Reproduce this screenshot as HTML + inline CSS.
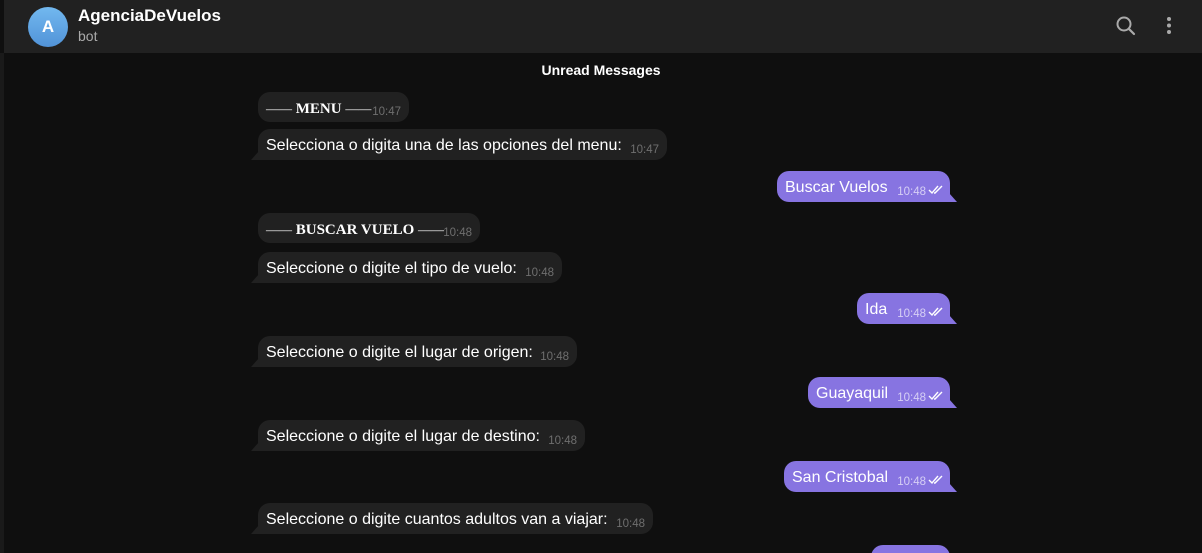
<!DOCTYPE html>
<html><head><meta charset="utf-8"><style>
*{margin:0;padding:0;box-sizing:border-box}
html,body{width:1202px;height:553px;overflow:hidden}
body{background:#0f0f0f;font-family:"Liberation Sans",sans-serif;position:relative}
.hdr{position:absolute;left:0;top:0;width:1202px;height:53px;background:#212121;border-left:4px solid #0f0f0f}
.av{position:absolute;left:28px;top:7px;width:40px;height:40px;border-radius:50%;background:linear-gradient(#72b8ef,#5193d8);color:#fff;font-weight:bold;font-size:17px;text-align:center;line-height:40px}
.name{position:absolute;left:78px;top:6px;color:#fff;font-weight:bold;font-size:17px}
.st{position:absolute;left:78px;top:28px;color:#aaa;font-size:14px}
.side{position:absolute;left:0;top:53px;width:4px;height:500px;background:#1a1a1a}
.unread{position:absolute;left:0;width:1202px;top:62px;text-align:center;color:#fff;font-weight:bold;font-size:14px}
.b{position:absolute;height:31px;border-radius:12px;color:#fff;font-size:16px;padding:8px 8px 0 8px;white-space:nowrap}
.in{background:#212121;left:258px}
.out{background:#8774e1}
.t{position:absolute;right:8px;bottom:4px;font-size:11.5px;color:#6f6f6f}
.out .t{color:#d6cff5;right:24px}
.ck{position:absolute;right:6px;bottom:7px}
.in.tl{border-bottom-left-radius:0}
.in.tl:before{content:"";position:absolute;left:-7px;bottom:0;border-right:8px solid #212121;border-top:9px solid transparent}
.out{border-bottom-right-radius:0}
.out:after{content:"";position:absolute;right:-7px;bottom:0;border-left:8px solid #8774e1;border-top:9px solid transparent}
.ser{font-family:"Liberation Serif",serif;font-weight:bold;font-size:15px}
.d{font-weight:normal;font-size:13px}
</style></head><body>
<div class="hdr"></div>
<div class="av">A</div>
<div class="name">AgenciaDeVuelos</div>
<div class="st">bot</div>
<svg style="position:absolute;left:1115px;top:15px" width="22" height="22" viewBox="0 0 22 22"><circle cx="9" cy="9" r="6.5" stroke="#aaa" stroke-width="2" fill="none"/><path d="M14 14l5 5" stroke="#aaa" stroke-width="2.2" stroke-linecap="round"/></svg>
<svg style="position:absolute;left:1165px;top:16px" width="8" height="20"><circle cx="4" cy="3" r="2" fill="#aaa"/><circle cx="4" cy="9.5" r="2" fill="#aaa"/><circle cx="4" cy="16" r="2" fill="#aaa"/></svg>
<div class="side"></div>
<div class="unread">Unread Messages</div>

<div class="b in" style="top:92px;width:151px;height:30px"><span class="ser"><span class="d">——</span> MENU <span class="d">——</span></span><span class="t">10:47</span></div>
<div class="b in tl" style="top:129px;width:409px">Selecciona o digita una de las opciones del menu:<span class="t">10:47</span></div>
<div class="b out" style="top:171px;left:777px;width:173px">Buscar Vuelos<span class="t">10:48</span><svg class="ck" width="16" height="10"><path d="M1 5l3 3 6-7M6 8l1 0 7-7" stroke="#fff" stroke-width="1.4" fill="none"/></svg></div>
<div class="b in" style="top:213px;width:222px;height:30px"><span class="ser"><span class="d">——</span> BUSCAR VUELO <span class="d">——</span></span><span class="t">10:48</span></div>
<div class="b in tl" style="top:252px;width:304px">Seleccione o digite el tipo de vuelo:<span class="t">10:48</span></div>
<div class="b out" style="top:293px;left:857px;width:93px">Ida<span class="t">10:48</span><svg class="ck" width="16" height="10"><path d="M1 5l3 3 6-7M6 8l1 0 7-7" stroke="#fff" stroke-width="1.4" fill="none"/></svg></div>
<div class="b in tl" style="top:336px;width:319px">Seleccione o digite el lugar de origen:<span class="t">10:48</span></div>
<div class="b out" style="top:377px;left:808px;width:142px">Guayaquil<span class="t">10:48</span><svg class="ck" width="16" height="10"><path d="M1 5l3 3 6-7M6 8l1 0 7-7" stroke="#fff" stroke-width="1.4" fill="none"/></svg></div>
<div class="b in tl" style="top:420px;width:327px">Seleccione o digite el lugar de destino:<span class="t">10:48</span></div>
<div class="b out" style="top:461px;left:784px;width:166px">San Cristobal<span class="t">10:48</span><svg class="ck" width="16" height="10"><path d="M1 5l3 3 6-7M6 8l1 0 7-7" stroke="#fff" stroke-width="1.4" fill="none"/></svg></div>
<div class="b in tl" style="top:503px;width:395px">Seleccione o digite cuantos adultos van a viajar:<span class="t">10:48</span></div>
<div class="b out" style="top:545px;left:871px;width:79px"></div>
</body></html>
